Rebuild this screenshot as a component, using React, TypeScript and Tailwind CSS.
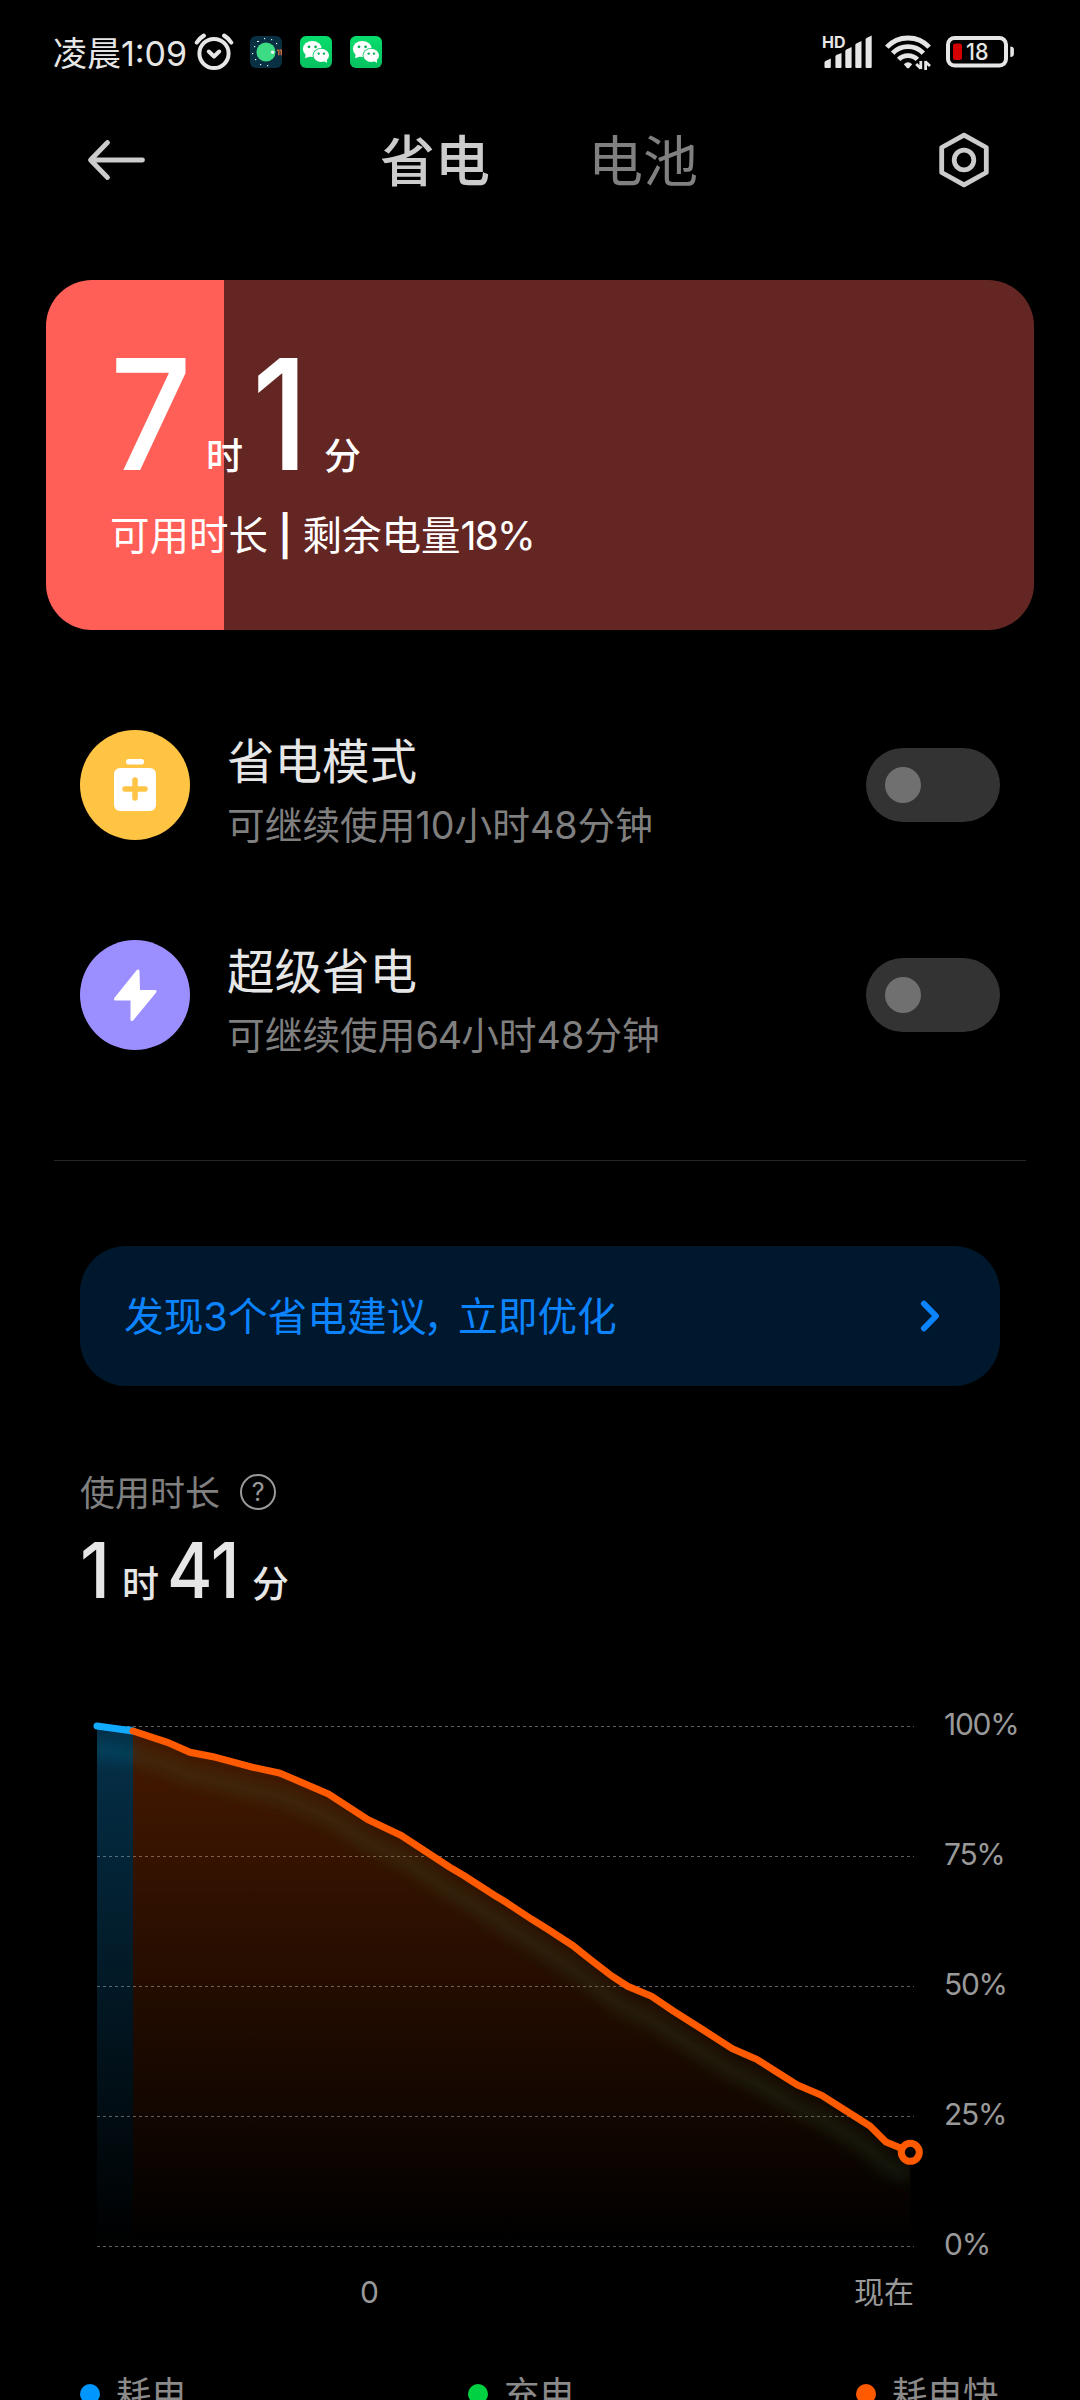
import React from "react";

const LINE: [number, number][] = [
  [133, 1731], [167.4, 1742.3], [190, 1752.3], [213, 1756.7], [253, 1767.3], [279.7, 1773],
  [328.6, 1794], [368, 1819.7], [401, 1835.3], [449, 1866.7], [464.6, 1876], [494, 1895],
  [506, 1902.3], [531.8, 1919.3], [549, 1930], [573, 1945.7], [590, 1959.3], [611.7, 1976],
  [627.7, 1986.3], [651.7, 1996.3], [673.3, 2011], [703.3, 2030], [732.3, 2048.7], [756.7, 2059.3],
  [776.7, 2072], [797.3, 2085], [821.7, 2095.3], [848.3, 2112.3], [870, 2126], [886, 2142],
  [903, 2149], [910.3, 2152.3],
];
const POINTS = LINE.map(([x, y]) => `${x},${y}`).join(" ");
const GRID = [1726.5, 1856.5, 1986.5, 2116.5, 2246.5];

function AlarmIcon() {
  return (
    <svg width="40" height="38" viewBox="0 0 40 38" fill="none" stroke="#e6e6e6" strokeLinecap="round">
      <circle cx="20" cy="20.5" r="14.600" strokeWidth="4" />
      <path d="M14.8 18.5 20 23.5 25.2 18.5" strokeWidth="4" strokeLinejoin="round" />
      <path d="M2.800 9.500 Q5.500 5.200 9.800 2.600M37.200 9.500 Q34.500 5.200 30.200 2.600" strokeWidth="4.200" />
    </svg>
  );
}

function AndroidIcon() {
  return (
    <svg width="32" height="32" viewBox="0 0 32 32">
      <rect width="32" height="32" rx="6" fill="#082f42" />
      <circle cx="16" cy="16" r="9.600" fill="#3ddc84" />
      <g fill="#e8f5f5">
        <rect x="14" y="2" width="1.200" height="1.200" /><rect x="21" y="3" width="1.200" height="1.200" />
        <rect x="7" y="5" width="2" height="1" /><rect x="26" y="7" width="1.200" height="1.200" />
        <rect x="4" y="10" width="1.200" height="1.200" /><rect x="2" y="17" width="1.200" height="1.200" />
        <rect x="5" y="23" width="1.200" height="1.200" /><rect x="10" y="28" width="1.200" height="1.200" />
        <rect x="17" y="29" width="1.200" height="1.200" />
        <circle cx="22.600" cy="16.200" r="1.700" />
      </g>
      <path d="M26.800 14.200h2v5M30 14.200h1.300v5" stroke="#c8693c" strokeWidth="1.500" fill="none" />
    </svg>
  );
}

function WeChatIcon() {
  return (
    <svg width="32" height="32" viewBox="0 0 32 32">
      <defs>
        <linearGradient id="wechat" x1="0" y1="0" x2="0" y2="1">
          <stop offset="0" stopColor="#07de6c" />
          <stop offset="1" stopColor="#07c160" />
        </linearGradient>
      </defs>
      <rect width="32" height="32" rx="6" fill="url(#wechat)" />
      <path d="M5 22.200 5.800 18 10 20.500z" fill="#fff" />
      <ellipse cx="12.300" cy="13" rx="9.400" ry="8" fill="#fff" />
      <ellipse cx="21.200" cy="19.400" rx="8.600" ry="7.400" fill="#07c964" />
      <ellipse cx="21.200" cy="19.400" rx="7.800" ry="6.600" fill="#fff" />
      <path d="M24 25 27 27 26.800 23z" fill="#fff" />
      <g fill="#07b058">
        <circle cx="9" cy="10.800" r="1.400" /><circle cx="15.600" cy="10.800" r="1.400" />
        <circle cx="18.700" cy="17.600" r="1.200" /><circle cx="24" cy="17.600" r="1.200" />
      </g>
    </svg>
  );
}

function SignalIcon() {
  return (
    <svg width="52" height="36" viewBox="0 0 52 36" fill="#e6e6e6">
      <text x="0" y="14" fontFamily="Inter" fontWeight="700" fontSize="16" textLength="23.500" lengthAdjust="spacingAndGlyphs">HD</text>
      <path d="M2.500 33V28.500q0-1 1-1.500l5.300-2.500V33q0 1-1 1h-4.300q-1 0-1-1z" />
      <path d="M13.400 33V22.500q0-1 1-1.500l5.100-2V33q0 1-1 1h-4.100q-1 0-1-1z" />
      <path d="M23.300 33V17q0-1 1-1.500l5.300-2.500V33q0 1-1 1h-4.300q-1 0-1-1z" />
      <path d="M33.300 33V11q0-1 1-1.500l5.200-2.500V33q0 1-1 1h-4.200q-1 0-1-1z" />
      <path d="M43.600 33V5.500q0-1 1-1.500l5.100-2.500V33q0 1-1 1h-4.100q-1 0-1-1z" />
    </svg>
  );
}

function WifiIcon() {
  return (
    <svg width="46" height="37" viewBox="0 0 46 37" fill="none" stroke="#e6e6e6" strokeWidth="4.800">
      <path d="M1.800 13.200a29 29 0 0 1 42.400 0" />
      <path d="M7.600 19.200a21.500 21.500 0 0 1 30.800 0" />
      <path d="M13.600 25.400a13.400 13.400 0 0 1 18.800 0" />
      <path d="M18.800 30.200q4.200-4 8.400 0l-3.200 3.800q-1 .9-2 0z" fill="#e6e6e6" stroke="none" />
      <path d="M35.800 27v8M35.800 34.600l-4.600-4.600M40.600 36v-9M40.200 27.500l4.800 4.600" strokeWidth="2.800" />
    </svg>
  );
}

function BatteryIcon() {
  return (
    <svg width="70" height="32" viewBox="0 0 70 32">
      <rect x="2" y="2" width="58" height="27.500" rx="6.500" fill="none" stroke="#e6e6e6" strokeWidth="4" />
      <rect x="7" y="7.500" width="9" height="16.500" rx="2.500" fill="#d40000" />
      <path d="M64.300 10.500q3.600 0 3.600 3v4.500q0 3-3.600 3z" fill="#e6e6e6" />
      <text x="20" y="24" fontFamily="Inter" fontWeight="500" fontSize="23" fill="#e6e6e6" textLength="22.500" lengthAdjust="spacingAndGlyphs">18</text>
    </svg>
  );
}

function ModeRow({ icon, title, children }: { icon: React.ReactNode; title: string; children: React.ReactNode }) {
  return (
    <div className="flex h-[110px] items-center">
      {icon}
      <div className="ml-[37px] flex flex-1 flex-col pt-[17px]">
        <span className="text-[47.500px] leading-[60px] text-[#e6e6e6]">{title}</span>
        <span className="mt-[3px] text-[37.700px] leading-[60px] text-[#7f7f7f]">{children}</span>
      </div>
      <div className="flex h-[74px] w-[134px] items-center rounded-full bg-[#333333] pl-[19px]">
        <div className="size-9 rounded-full bg-[#707070]" />
      </div>
    </div>
  );
}

function Legend({ color, label }: { color: string; label: string }) {
  return (
    <div className="flex w-[388px] shrink-0 items-center">
      <i className={`size-5 rounded-full ${color}`} />
      <span className="ml-4 pt-0.5 text-[35.500px] leading-[44px] text-[#8a8a8a]">{label}</span>
    </div>
  );
}

export default function App() {
  return (
    <div className="flex h-[2400px] w-[1080px] flex-col overflow-hidden whitespace-nowrap bg-black font-['Inter','Noto_Sans_CJK_SC',sans-serif] text-white">
      <div className="flex h-[104px] shrink-0 items-center pl-[53px] pr-[64px] text-[#e6e6e6]">
        <span className="w-[133px] pt-[3px] text-[34px]">凌晨1:09</span>
        <span className="ml-2"><AlarmIcon /></span>
        <span className="ml-4"><AndroidIcon /></span>
        <span className="ml-[18px]"><WeChatIcon /></span>
        <span className="ml-[18px]"><WeChatIcon /></span>
        <span className="ml-auto"><SignalIcon /></span>
        <span className="ml-[11px]"><WifiIcon /></span>
        <span className="ml-[15px]"><BatteryIcon /></span>
      </div>

      <div className="flex h-28 shrink-0 items-center pl-[86px] pr-[90px]">
        <svg width="60" height="44" viewBox="0 0 60 44" fill="none" stroke="#cccccc" strokeWidth="4.800" strokeLinecap="round" strokeLinejoin="round">
          <path d="M21.500 4.500 4.500 22l17 17.500M5 22h51.500" />
        </svg>
        <span className="ml-[234px] pt-[3px] text-[55px] font-medium text-[#cccccc]">省电</span>
        <span className="ml-[98px] pt-[3px] text-[55px] text-[#808080]">电池</span>
        <svg className="ml-auto" width="52" height="56" viewBox="0 0 52 56" fill="none" stroke="#cccccc" strokeWidth="4.800" strokeLinejoin="round">
          <path d="M26 3.200 48.300 15.500V40.500L26 52.800 3.700 40.500V15.500z" />
          <circle cx="26" cy="28" r="9.800" />
        </svg>
      </div>

      <div className="mx-[46px] mt-16 flex h-[350px] shrink-0 flex-col overflow-hidden rounded-[46px] bg-[linear-gradient(to_right,#ff5f57_178px,#642622_178px)] pl-[64px] pt-[64px]">
        <div className="flex h-[140px] items-baseline font-medium leading-[140px]">
          <span className="w-[96px] origin-left scale-x-[.93] text-[154px]">7</span>
          <span className="w-[46px] text-[37px]">时</span>
          <span className="w-[72px] origin-left scale-x-[.88] text-[154px]">1</span>
          <span className="text-[37px]">分</span>
        </div>
        <div className="mt-[22px] text-[39.500px] leading-[60px]">
          可用时长 <span className="mx-[-1px] font-semibold">|</span> 剩余电量<span className="tracking-[-2px]">18%</span>
        </div>
      </div>

      <div className="mt-[100px] flex shrink-0 flex-col gap-[100px] px-20">
        <ModeRow
          title="省电模式"
          icon={
            <svg width="110" height="110" viewBox="0 0 110 110">
              <circle cx="55" cy="55" r="55" fill="#ffc444" />
              <rect x="46" y="29" width="18" height="5.500" rx="2.500" fill="#fff" />
              <rect x="34" y="38" width="42" height="43" rx="6" fill="#fff" />
              <path d="M55 50v18M45 59h20" stroke="#ffc444" strokeWidth="5.500" strokeLinecap="round" />
            </svg>
          }
        >
          可继续使用10小时48分钟
        </ModeRow>
        <ModeRow
          title="超级省电"
          icon={
            <svg width="110" height="110" viewBox="0 0 110 110">
              <circle cx="55" cy="55" r="55" fill="#9b8fff" />
              <path d="M58 31 35.500 59H52V79.500L75 51.500H58.500z" fill="#fff" stroke="#fff" strokeWidth="3" strokeLinejoin="round" />
            </svg>
          }
        >
          可继续使用<span className="tracking-[-1px]">64</span>小时48分钟
        </ModeRow>
      </div>

      <div className="mx-[54px] mt-[110px] h-px shrink-0 bg-[#262626]" />

      <div className="mx-20 mt-[85px] flex h-[140px] shrink-0 items-center justify-between rounded-[46px] bg-[#00182e] pl-[44px] pr-[58px] text-[#0d84ff]">
        <span className="pt-[3px] text-[39.700px]">
          发现3个省电建议<span className="-ml-[3px] mr-[-5px]">，</span>立即优化
        </span>
        <svg width="24" height="34" viewBox="0 0 24 34" fill="none" stroke="#0d84ff" strokeWidth="5.800" strokeLinecap="round" strokeLinejoin="round">
          <path d="M5.900 4.600 18 17 5.900 29.400" />
        </svg>
      </div>

      <div className="mt-[82px] flex h-12 shrink-0 items-center px-20 text-[#808080]">
        <span className="pt-[3px] text-[35px]">使用时长</span>
        <span className="ml-5 flex size-9 items-center justify-center rounded-full border-[2.500px] border-[#999] text-[25px] leading-none text-[#999]">?</span>
      </div>
      <div className="mt-2 flex h-[92px] shrink-0 items-baseline px-20 font-medium leading-[92px] text-[#e6e6e6]">
        <span className="w-[42px] origin-left scale-x-[.94] text-[77px]">1</span>
        <span className="w-[45px] text-[37px]">时</span>
        <span className="w-[85px] origin-left scale-x-[.9] text-[77px]">41</span>
        <span className="text-[37px]">分</span>
      </div>

      <div className="mt-[64px] flex h-[580px] shrink-0 text-[#999999]">
        <svg width="930" height="580" viewBox="0 1680 930 580" fill="none">
          <defs>
            <linearGradient id="orange" gradientUnits="userSpaceOnUse" x1="0" y1="1726" x2="0" y2="2246">
              <stop offset="0" stopColor="#ff5a00" stopOpacity=".28" />
              <stop offset="1" stopColor="#ff5a00" stopOpacity="0" />
            </linearGradient>
            <linearGradient id="blue" gradientUnits="userSpaceOnUse" x1="0" y1="1726" x2="0" y2="2246">
              <stop offset="0" stopColor="#0ea8ff" stopOpacity=".29" />
              <stop offset="1" stopColor="#0ea8ff" stopOpacity="0" />
            </linearGradient>
            <clipPath id="area">
              <polygon points={`97,1726 ${POINTS} 910.3,2246 97,2246`} />
            </clipPath>
            <filter id="glow" filterUnits="userSpaceOnUse" x="0" y="1680" width="1000" height="580">
              <feGaussianBlur stdDeviation="7" />
            </filter>
          </defs>
          {GRID.map((y) => (
            <path key={y} d={`M97 ${y}H914`} stroke="#606060" strokeDasharray="3 3" />
          ))}
          <rect x="97" y="1726" width="36" height="520" fill="url(#blue)" />
          <polygon points={`${POINTS} 910.3,2246 133,2246`} fill="url(#orange)" />
          <g clipPath="url(#area)">
            <g filter="url(#glow)" transform="translate(0 23)" strokeWidth="17">
              <path d="M90 1726 133 1731" stroke="#087090" strokeOpacity=".28" />
              <polyline points={POINTS} stroke="#3a6a38" strokeOpacity=".2" />
            </g>
          </g>
          <path d="M97 1726 133 1731" stroke="#12aaff" strokeWidth="7" strokeLinecap="round" />
          <polyline points={POINTS} stroke="#ff5a00" strokeWidth="7" strokeLinecap="round" />
          <circle cx="910.300" cy="2152.300" r="9" fill="#000" stroke="#ff5a00" strokeWidth="7" />
        </svg>
        <div className="ml-[14px] flex flex-col gap-[90px] pt-[24px] text-[30px] leading-[40px] tracking-[-1.300px]">
          <span>100%</span>
          <span>75%</span>
          <span>50%</span>
          <span>25%</span>
          <span className="h-[40px]">0%</span>
        </div>
      </div>

      <div className="mt-3 flex h-10 shrink-0 items-center justify-between pl-[360px] pr-[166px] text-[30px] text-[#999999]">
        <span>0</span>
        <span>现在</span>
      </div>

      <div className="mt-[60px] flex h-[44px] shrink-0 px-20">
        <Legend color="bg-[#0096ff]" label="耗电" />
        <Legend color="bg-[#00d143]" label="充电" />
        <Legend color="bg-[#ff5a00]" label="耗电快" />
      </div>
    </div>
  );
}
